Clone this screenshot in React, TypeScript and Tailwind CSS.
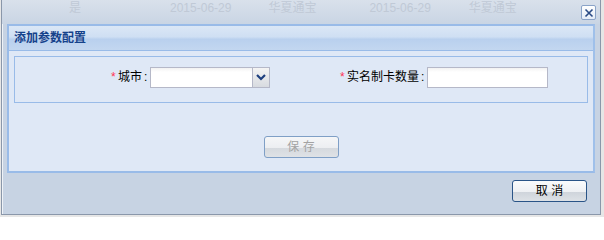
import React from "react";

const cjk = { fontFamily: '"Liberation Sans", "Noto Sans CJK SC", sans-serif' };

function CloseIcon() {
  return (
    <svg width="10" height="10" viewBox="0 0 10 10">
      <path d="M1.5 1.5 L8.5 8.5 M8.5 1.5 L1.5 8.5" stroke="#2a4a85" strokeWidth="1.6" />
    </svg>
  );
}

function Chevron() {
  return (
    <svg width="10" height="7" viewBox="0 0 10 7">
      <path d="M1 1 L5 5 L9 1" stroke="#1e3f7e" strokeWidth="2.2" fill="none" />
    </svg>
  );
}

function Label({ text, width }: { text: string; width: string }) {
  return (
    <span className={`${width} flex justify-end text-[12px] leading-[20px] text-black`}>
      <span className="w-[7px] text-[#f35]">*</span>
      <span>{text}</span>
      <span className="w-[6px] pl-[2px]">:</span>
    </span>
  );
}

function Button({ text, disabled }: { text: string; disabled?: boolean }) {
  return (
    <button
      className={`h-[22px] w-[75px] rounded-[3px] border text-[12px] leading-[20px] ${
        disabled
          ? "border-[#7f9fc6] bg-[linear-gradient(#f5f6f8_0%,#eceef1_55%,#d5d9de_56%,#dfe2e6_100%)] text-[#a3a3a3]"
          : "border-[#2a5487] bg-[linear-gradient(#fafbfc_0%,#eef0f3_55%,#cfd4db_56%,#dde1e6_100%)] text-black"
      }`}>
      {text}
    </button>
  );
}

export default function App() {
  return (
    <div className="h-[217px] w-[604px] overflow-hidden bg-[#e6e6e6]" style={cjk}>
      <div className="ml-px h-[215px] w-[600px] border border-t-0 border-[#8a97aa] bg-[#c7d3e3] shadow-[inset_1px_0_0_#eef2f7]">
        {/* 标题栏 */}
        <div className="relative h-[24px] bg-[linear-gradient(#d9e1eb,#c9d5e4)]">
          <div className="flex h-[15px] items-center text-[12px] text-[#c0c9d6]">
            <span className="ml-[67px]">是</span>
            <span className="ml-[89px]">2015-06-29</span>
            <span className="ml-[37px]">华夏通宝</span>
            <span className="ml-[53px]">2015-06-29</span>
            <span className="ml-[38px]">华夏通宝</span>
          </div>
          <div className="absolute right-[4px] top-[5px] flex h-[15px] w-[15px] items-center justify-center rounded-[2px] border border-[#8aa3c8] bg-[linear-gradient(#ffffff,#e4ecf7)]">
            <CloseIcon />
          </div>
        </div>

        {/* 面板 */}
        <div className="mx-[5px] border-2 border-[#99bbe8] border-r-[#9fc0ea] shadow-[inset_1px_1px_0_#ffffff]">
          <div className="flex h-[25px] items-center border-b border-[#99bbe8] bg-[linear-gradient(#dbe7f6_0%,#cfdff3_45%,#b9d0ee_55%,#c3d7f0_100%)] pl-[5px] text-[12px] font-bold text-[#15428b]">
            添加参数配置
          </div>
          <div className="h-[120px] bg-[#dfe8f6] px-[5px] pt-[5px]">
            <div className="flex h-[47px] items-start border border-[#99bbe8] pt-[10px]">
              <Label text="城市" width="w-[133px]" />
              <div className="ml-[2px] flex">
                <div className="h-[21px] w-[103px] border border-[#b5b8c8] bg-[linear-gradient(#f2f2f2,#ffffff_4px)]" />
                <div className="flex h-[21px] w-[17px] items-center justify-center border border-l-0 border-[#b5b8c8] bg-[linear-gradient(#f4f4f4,#d8dbe0)]">
                  <Chevron />
                </div>
              </div>
              <Label text="实名制卡数量" width="w-[155px]" />
              <div className="ml-[2px] h-[21px] w-[121px] border border-[#b5b8c8] bg-[linear-gradient(#f2f2f2,#ffffff_4px)]" />
            </div>
            <div className="mt-[33px] flex justify-center">
              <Button text="保 存" disabled />
            </div>
          </div>
        </div>

        {/* 底部按钮 */}
        <div className="flex justify-end pr-[13px] pt-[7px]">
          <Button text="取 消" />
        </div>
      </div>
    </div>
  );
}
